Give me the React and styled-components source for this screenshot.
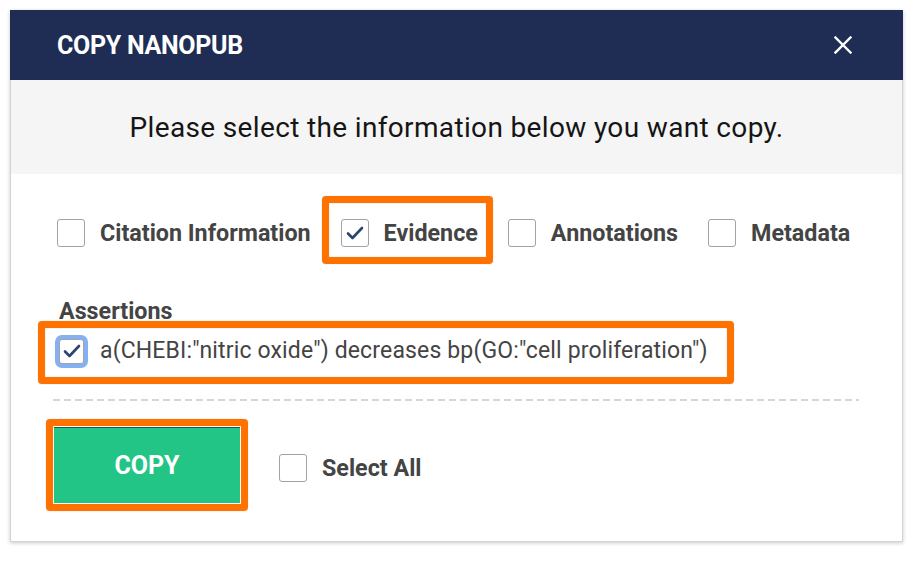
import React from "react";
import styled, { createGlobalStyle } from "styled-components";

const Global = createGlobalStyle`
  html, body { margin: 0; padding: 0; background: #ffffff; }
  body { font-family: Roboto, "Noto Sans", Arial, sans-serif; }
  * { box-sizing: border-box; }
`;

const Page = styled.div`
  padding: 10px;
  width: 913px;
  height: 579px;
`;

const Dialog = styled.div`
  width: 893px;
  height: 532px;
  background: #fff;
  border: 1px solid #d4d4d4;
  box-shadow: 0 1px 4px rgba(0, 0, 0, 0.22);
  display: flex;
  flex-direction: column;
`;

const Header = styled.div`
  height: 70px;
  margin: -1px -1px 0 -1px;
  background: #1f2d55;
  display: flex;
  align-items: center;
  justify-content: space-between;
  padding: 0 50px 0 47px;
`;

const Title = styled.h1`
  margin: 0;
  color: #fff;
  font-size: 25px;
  font-weight: 700;
  letter-spacing: -0.3px;
`;

const CloseButton = styled.button`
  border: 0;
  background: transparent;
  padding: 0;
  width: 20px;
  height: 20px;
  display: flex;
  align-items: center;
  justify-content: center;
  cursor: pointer;
`;

const SubHeader = styled.div`
  height: 94px;
  background: #f5f5f5;
  display: flex;
  align-items: center;
  justify-content: center;
  font-size: 28px;
  letter-spacing: 0.35px;
  color: #151515;
`;

const Body = styled.div`
  padding: 45px 43px 0 33px;
  display: flex;
  flex-direction: column;
`;

const OptionsRow = styled.div`
  display: flex;
  align-items: center;
  gap: 30px;
  padding-left: 13px;
`;

const Option = styled.label`
  position: relative;
  display: flex;
  align-items: center;
  gap: 15px;
  font-size: 23.3px;
  font-weight: 700;
  color: #444;
  line-height: 28px;
  white-space: nowrap;
  cursor: pointer;
`;

const Highlight = styled.span`
  position: absolute;
  inset: ${(p) => p.$inset};
  border: 7px solid #ff7200;
  border-radius: 4px;
  box-shadow: 0 0 1px rgba(0, 0, 0, 0.35), inset 0 0 1px rgba(0, 0, 0, 0.35);
  pointer-events: none;
`;

const Box = styled.span`
  width: ${(p) => p.$size}px;
  height: ${(p) => p.$size}px;
  flex: none;
  border: 1.5px solid #a3a3a3;
  border-radius: 3px;
  background: #fff;
  display: flex;
  align-items: center;
  justify-content: center;
  box-shadow: ${(p) => (p.$focus ? "0 0 0 4px #84b0f4" : "none")};
`;

const SectionLabel = styled.div`
  margin-top: 50px;
  padding-left: 15px;
  font-size: 23.3px;
  font-weight: 700;
  color: #444;
  line-height: 28px;
`;

const AssertionRow = styled.label`
  position: relative;
  align-self: flex-start;
  margin: 12px 0 0 15px;
  display: flex;
  align-items: center;
  gap: 16px;
  font-size: 23px;
  letter-spacing: 0.15px;
  color: #444;
  line-height: 28px;
  white-space: nowrap;
`;

const Divider = styled.div`
  margin: 34px 0 0 9px;
  height: 2px;
  background: repeating-linear-gradient(to right, #d6d6d6 0 7px, transparent 7px 11px);
`;

const Footer = styled.div`
  margin-top: 26px;
  display: flex;
  align-items: center;
  gap: 39px;
  padding-left: 10px;
`;

const ButtonWrap = styled.div`
  position: relative;
`;

const CopyButton = styled.button`
  width: 186px;
  height: 76px;
  border: 0;
  background: #23c586;
  box-shadow: inset 0 1px 0 #1a5e4c;
  color: #fff;
  font-family: inherit;
  font-size: 25px;
  font-weight: 700;
  cursor: pointer;
  display: block;
`;

const SelectAll = styled(Option)`
  margin-top: 6px;
`;

const Check = () => (
  <svg width="20" height="16" viewBox="0 0 20 16" fill="none">
    <path d="M3 8.5 L7.5 13 L17 3" stroke="#2b4570" strokeWidth="2.6" strokeLinecap="round" strokeLinejoin="round" />
  </svg>
);

const Checkbox = ({ checked, focus, size = 28 }) => (
  <Box $size={size} $focus={focus}>
    {checked && <Check />}
  </Box>
);

export default function App() {
  return (
    <>
      <Global />
      <Page>
        <Dialog>
          <Header>
            <Title>COPY NANOPUB</Title>
            <CloseButton aria-label="close">
              <svg width="18" height="18" viewBox="0 0 18 18">
                <path d="M1.5 1.5 L16.5 16.5 M16.5 1.5 L1.5 16.5" stroke="#fff" strokeWidth="2.4" strokeLinecap="square" />
              </svg>
            </CloseButton>
          </Header>
          <SubHeader>Please select the information below you want copy.</SubHeader>
          <Body>
            <OptionsRow>
              <Option>
                <Checkbox />
                Citation Information
              </Option>
              <Option>
                <Checkbox checked />
                Evidence
                <Highlight $inset="-23px -15px -17px -19px" />
              </Option>
              <Option>
                <Checkbox />
                Annotations
              </Option>
              <Option>
                <Checkbox />
                Metadata
              </Option>
            </OptionsRow>
            <SectionLabel>Assertions</SectionLabel>
            <AssertionRow>
              <Checkbox checked focus size={25} />
              a(CHEBI:"nitric oxide") decreases bp(GO:"cell proliferation")
              <Highlight $inset="-16px -26px -19px -21px" />
            </AssertionRow>
            <Divider />
            <Footer>
              <ButtonWrap>
                <CopyButton>COPY</CopyButton>
                <Highlight $inset="-8px" />
              </ButtonWrap>
              <SelectAll>
                <Checkbox />
                Select All
              </SelectAll>
            </Footer>
          </Body>
        </Dialog>
      </Page>
    </>
  );
}
